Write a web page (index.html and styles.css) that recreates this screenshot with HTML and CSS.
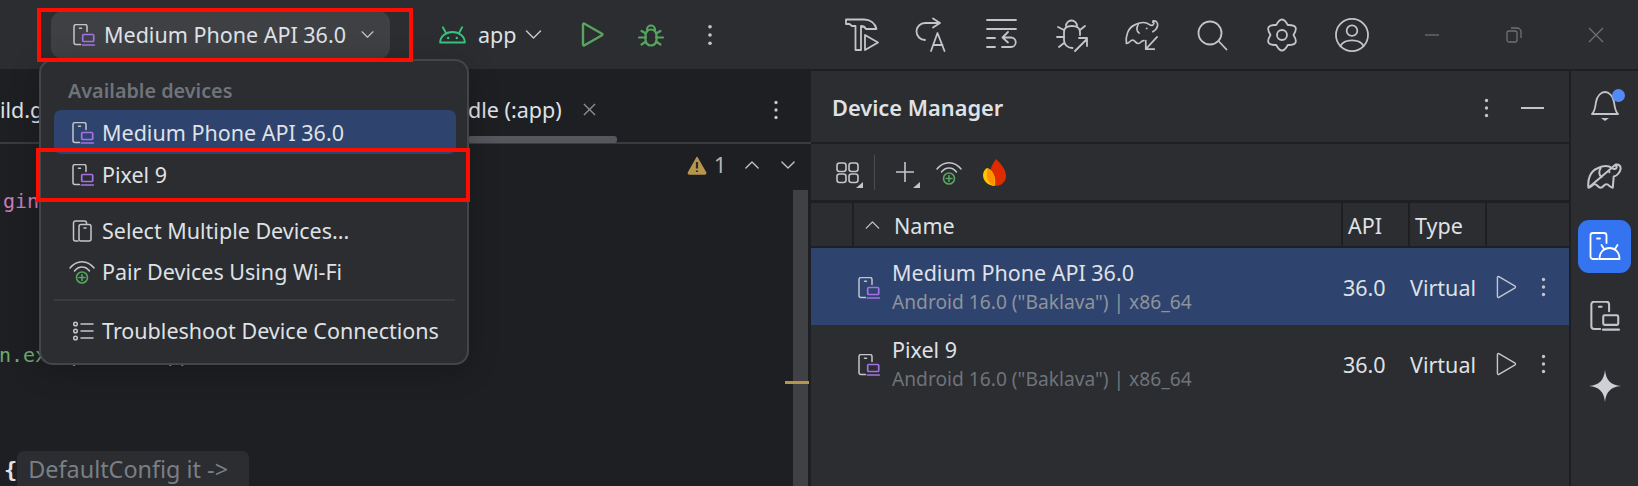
FILE: index.html
```html
<!DOCTYPE html>
<html lang="en">
<head>
<meta charset="utf-8">
<title>Device Manager</title>
<link rel="stylesheet" href="styles.css">
</head>
<body>
<svg class="defs" width="0" height="0" aria-hidden="true">
  <symbol id="device" viewBox="0 0 22 22">
    <path class="ln" d="M7.500 20.500H3a2 2 0 0 1-2-2V2.500a2 2 0 0 1 2-2h9a2 2 0 0 1 2 2V7.500"/>
    <path class="ln" d="M6.500 4.200h2"/>
    <rect class="pu" x="9.700" y="10.500" width="11" height="7" rx="1"/>
    <path class="pu" d="M9.500 21h11.800"/>
  </symbol>
  <symbol id="device-g" viewBox="0 0 22 22">
    <path class="ln" d="M7.500 20.500H3a2 2 0 0 1-2-2V2.500a2 2 0 0 1 2-2h9a2 2 0 0 1 2 2V7.500"/>
    <path class="ln" d="M6.500 4.200h2"/>
    <rect class="ln" x="9.700" y="10.500" width="11" height="7" rx="1"/>
    <path class="ln" d="M9.500 21h11.800"/>
  </symbol>
  <symbol id="wifi" viewBox="0 0 26 25">
    <path class="ln" d="M1 9C7.500 .5 18.500 .5 25 9"/>
    <path class="ln" d="M5.500 12C9.500 6.500 16.500 6.500 20.500 12"/>
    <circle class="gr" cx="13" cy="18.500" r="5.500"/>
    <path class="gr" d="M13 15.500v6M10 18.500h6"/>
  </symbol>
  <symbol id="kebab" viewBox="0 0 6 24">
    <circle class="dot" cx="3" cy="3" r="2"/>
    <circle class="dot" cx="3" cy="12" r="2"/>
    <circle class="dot" cx="3" cy="21" r="2"/>
  </symbol>
  <symbol id="chev-d" viewBox="0 0 16 9">
    <path class="ln" d="M1 1l7 7 7-7"/>
  </symbol>
  <symbol id="chev-u" viewBox="0 0 16 9">
    <path class="ln" d="M1 8l7-7 7 7"/>
  </symbol>
  <symbol id="play" viewBox="0 0 22 25">
    <path class="ln" d="M1.500 2.500a1 1 0 0 1 1.500-.8l17 10a1 1 0 0 1 0 1.600l-17 10a1 1 0 0 1-1.500-.8z"/>
  </symbol>
  <symbol id="elephant" viewBox="0 0 36 27">
    <path class="eleph-ln" d="M1.500 25C.5 17 3 8 11 5c5-2.500 11-3 15 0 2 1.500 4 1 4.500-1 .3-1-.5-1.500-1-1.500M29.500 1.200C33 .5 35 3 34.500 6c-.5 4-4.500 7-7 7.500L26.500 25c-3.500 0-3.500-3.500-6.500-3.500S17 25 14 25s-3-3.500-6-3.500S5 25 1.500 25z"/>
    <path class="eleph-ln" d="M14 5c-2 3-2 7 1 9"/>
    <circle class="dot" cx="23" cy="9" r="1.100"/>
  </symbol>
</svg>

<header class="toolbar">
  <div class="tb-left">
    <div class="device-btn">
      <svg class="ic22"><use href="#device"/></svg>
      <span class="device-label">Medium Phone API 36.0</span>
      <svg class="chev-s"><use href="#chev-d"/></svg>
    </div>
    <svg class="android" viewBox="0 0 28 18">
      <path d="M1.200 16.800a12.800 11 0 0 1 25.600 0z"/>
      <path d="M7 6.500L4 1M21 6.500L24 1"/>
      <circle cx="9.500" cy="12" r="1.300"/>
      <circle cx="18.500" cy="12" r="1.300"/>
    </svg>
    <span class="app-label">app</span>
    <svg class="chev-app"><use href="#chev-d"/></svg>
    <svg class="run" viewBox="0 0 23 25"><path d="M2 2.500a1 1 0 0 1 1.500-.8l17.500 10a1 1 0 0 1 0 1.600l-17.500 10a1 1 0 0 1-1.500-.8z"/></svg>
    <svg class="debug" viewBox="0 0 26 24">
      <path d="M9 6.500a4 4 0 0 1 8 0"/>
      <rect x="7.500" y="6.500" width="11" height="16" rx="5.500"/>
      <path d="M8 10.500L3.500 8M8 14.500H1M8 18.500L3.500 21.500M18 10.500L22.500 8M18 14.500h7M18 18.500l4.500 3"/>
    </svg>
    <svg class="tb-kebab"><use href="#kebab"/></svg>
  </div>
  <div class="tb-right">
    <div class="tool"><svg class="tic" viewBox="0 0 34 34">
      <path d="M1 1.500h18c6 0 11 3.500 12.500 9.500H21c-1-2-2.500-3-5-3v24h-5.500V8H7L4.500 6H1z"/>
      <path d="M20 17l13 7.500L20 32z"/>
    </svg></div>
    <div class="tool"><svg class="tic" viewBox="0 0 32 34">
      <path d="M23.500 5H9a8.500 8.500 0 0 0 0 17M17 .5l7 4.500-7 4.500"/>
      <path d="M15 33l6.500-18 7 18M17.500 27h9"/>
    </svg></div>
    <div class="tool"><svg class="tic" viewBox="0 0 30 34">
      <path d="M0 2h29M0 11h29M0 20h8M0 29h8M21 14l-5.500 5.500 5.500 5M16 19.500h8a4.500 4.500 0 0 1 0 9.500H15"/>
    </svg></div>
    <div class="tool"><svg class="tic" viewBox="0 0 32 34">
      <path d="M10 8a5.500 5.500 0 0 1 11 0"/>
      <path d="M24 17v-3c0-4-3-6-8-6s-8 2-8 6v8c0 5 4 8 8.500 8"/>
      <path d="M8 12L2 9M8 19H1M8 25l-5 4M24 12l5-4M19 33L31 21M23 20h8v8"/>
    </svg></div>
    <div class="tool"><svg class="tic" viewBox="0 0 36 34">
      <path d="M1.500 26C.5 18 3 9 11 6c5-2.500 11-3 15 0 2 1.500 4 1 4.500-1 .3-1-.5-1.500-1-1.500M29.500 2.200C33 1.500 35 4 34.500 7c-.5 3-2.500 5-5 6.500M1.500 26c3.500 0 3.500-3.500 6.500-3.500s3 3.500 6 3.500 3-3.500 6-3"/>
      <path d="M14 6c-2 3-2 7 1 9"/>
      <path d="M34 19L22 32M22 23v9h9"/>
      <circle class="dotf" cx="23" cy="10" r="1"/>
    </svg></div>
    <div class="tool"><svg class="tic" viewBox="0 0 30 34">
      <circle cx="13" cy="15" r="11.500"/>
      <path d="M21.500 23l8 8.500"/>
    </svg></div>
    <div class="tool"><svg class="tic" viewBox="0 0 30 34">
      <path d="M9.250 7.040Q15-4 20.750 7.040 33.190 6.500 26.500 17 33.190 27.500 20.750 26.960 15 38 9.250 26.960-3.190 27.500 3.500 17-3.190 6.500 9.250 7.040z"/>
      <circle cx="15" cy="17" r="5"/>
    </svg></div>
    <div class="tool"><svg class="tic" viewBox="0 0 35 35">
      <circle cx="17.500" cy="17.500" r="16.500"/>
      <circle cx="17.500" cy="13" r="5.500"/>
      <path d="M5.500 29c2-4 6-6 12-6s10 2 12 6"/>
    </svg></div>
    <div class="win"><svg class="wic" viewBox="0 0 16 16"><path d="M1 8h14"/></svg></div>
    <div class="win"><svg class="wic" viewBox="0 0 16 16"><rect x="1" y="4" width="10" height="11" rx="2"/><path d="M5 1h6a4 4 0 0 1 4 4v6"/></svg></div>
    <div class="win"><svg class="wic" viewBox="0 0 16 16"><path d="M1 1l14 14M15 1L1 15"/></svg></div>
  </div>
</header>

<main class="main">
  <section class="editor">
    <div class="tabs">
      <span class="tab tab-first">ild.gradle</span>
      <span class="tab">dle (:app)</span>
      <svg class="tab-x" viewBox="0 0 14 14"><path d="M1 1l12 12M13 1L1 13"/></svg>
      <svg class="tab-kebab"><use href="#kebab"/></svg>
      <div class="tab-scroll"></div>
    </div>
    <div class="code-wrap">
      <div class="code">
        <div class="line pink">gins {</div>
        <div class="line"></div>
        <div class="line"></div>
        <div class="line"></div>
        <div class="line green">n.example.com/pp</div>
        <div class="line"></div>
        <div class="line"></div>
        <div class="line"><span class="brace">{</span><span class="hint">DefaultConfig it -&gt;</span></div>
      </div>
      <div class="inspect">
        <svg class="warn" viewBox="0 0 20 19">
          <path class="warn-t" d="M10 1.500L1.500 16.500a1 1 0 0 0 1 1.500h15a1 1 0 0 0 1-1.500z"/>
          <path class="warn-m" d="M10 6v6.500M10 14.500v1.500"/>
        </svg>
        <span class="warn-n">1</span>
        <svg class="chev-i up"><use href="#chev-u"/></svg>
        <svg class="chev-i dn"><use href="#chev-d"/></svg>
      </div>
      <div class="vscroll"><div class="vmark"></div></div>
    </div>
  </section>

  <section class="panel">
    <div class="panel-head">
      <h1 class="panel-title">Device Manager</h1>
      <svg class="ph-kebab"><use href="#kebab"/></svg>
      <div class="ph-min"></div>
    </div>
    <div class="panel-tools">
      <svg class="pt-grid" viewBox="0 0 27 26">
        <rect x="1" y="1" width="9" height="8.500" rx="2.500"/>
        <rect x="13" y="1" width="9" height="8.500" rx="2.500"/>
        <rect x="1" y="12" width="9" height="8.500" rx="2.500"/>
        <rect x="13" y="12" width="9" height="8.500" rx="2.500"/>
        <path class="tri" d="M27 20v6h-7z"/>
      </svg>
      <div class="pt-sep"></div>
      <svg class="pt-plus" viewBox="0 0 26 26">
        <path d="M9 0v20M0 10h18"/>
        <path class="tri" d="M24 20v6h-7z"/>
      </svg>
      <svg class="pt-wifi"><use href="#wifi"/></svg>
      <svg class="pt-fire" viewBox="0 0 23 27">
        <path fill="#dd2c00" d="M13 0c4 4 10 10 10 17 0 6-5 10-10.500 10C8 27 5 24 4 20 6 17 7 13 8 9c1-3 3-6 5-9z"/>
        <path fill="#ffc400" d="M4 9c4 1 7 5 8 11 .4 3 .2 5-.5 7C6 26.500 0 23 0 16 0 13 2 10 4 9z"/>
        <path fill="#ff9100" d="M4.500 9.500c3.500 1 6.500 5 7 10.500.3 2.500.2 5-.5 7-3-1-6-5-6.800-8.500C4 15 4 12 4.500 9.500z"/>
      </svg>
    </div>
    <div class="t-head">
      <div class="th th-first"></div>
      <div class="th th-name"><svg class="chev-th"><use href="#chev-u"/></svg><span>Name</span></div>
      <div class="th">API</div>
      <div class="th">Type</div>
      <div class="th"></div>
    </div>
    <div class="t-row selected">
      <svg class="ic22 row-ic"><use href="#device"/></svg>
      <div class="row-name">
        <div class="row-title">Medium Phone API 36.0</div>
        <div class="row-sub">Android 16.0 ("Baklava") | x86_64</div>
      </div>
      <div class="row-val">36.0</div>
      <div class="row-val">Virtual</div>
      <div class="row-acts">
        <svg class="row-play"><use href="#play"/></svg>
        <svg class="row-kebab"><use href="#kebab"/></svg>
      </div>
    </div>
    <div class="t-row">
      <svg class="ic22 row-ic"><use href="#device"/></svg>
      <div class="row-name">
        <div class="row-title">Pixel 9</div>
        <div class="row-sub">Android 16.0 ("Baklava") | x86_64</div>
      </div>
      <div class="row-val">36.0</div>
      <div class="row-val">Virtual</div>
      <div class="row-acts">
        <svg class="row-play"><use href="#play"/></svg>
        <svg class="row-kebab"><use href="#kebab"/></svg>
      </div>
    </div>
  </section>

  <aside class="stripe">
    <div class="st-cell">
      <div class="bell-wrap">
        <svg class="st-bell" viewBox="0 0 28 32">
          <path d="M1 24c3-3 3-6 4-12 1-6 5-10 9-10s8 4 9 10c1 6 1 9 4 12z"/>
          <path class="bell-clap" d="M10 28h8l-4 3z"/>
        </svg>
        <span class="badge"></span>
      </div>
    </div>
    <div class="st-cell"><svg class="st-eleph"><use href="#elephant"/></svg></div>
    <div class="st-cell">
      <div class="st-active">
        <svg class="st-run" viewBox="0 0 32 30">
          <path d="M9 28H4a2.500 2.500 0 0 1-2.500-2.500v-21A2.500 2.500 0 0 1 4 2h11a2.500 2.500 0 0 1 2.500 2.500V12"/>
          <path d="M8 7.500h3"/>
          <path d="M10.500 28c0-7 4.500-11 10-11s10 4 10 11z"/>
          <path d="M15 18l-2.500-4M26 18l2.500-4"/>
        </svg>
      </div>
    </div>
    <div class="st-cell"><svg class="st-dev"><use href="#device-g"/></svg></div>
    <div class="st-cell"><svg class="st-star" viewBox="0 0 32 32"><path d="M16 0c1 10 5.500 15 16 16-10.500 1-15 6-16 16-1-10-5.500-15-16-16C10.500 15 15 10 16 0z"/></svg></div>
  </aside>
</main>

<div class="popup">
  <div class="pop-title">Available devices</div>
  <div class="pop-row pop-selected"><svg class="ic22"><use href="#device"/></svg><span>Medium Phone API 36.0</span></div>
  <div class="pop-row"><svg class="ic22"><use href="#device"/></svg><span>Pixel 9</span></div>
  <div class="pop-sep pop-sep-a"></div>
  <div class="pop-row">
    <svg class="ic22" viewBox="0 0 22 22">
      <path class="ln" d="M6 21H3.500a2 2 0 0 1-2-2V3a2 2 0 0 1 2-2h9a2 2 0 0 1 2 2v1"/>
      <rect class="ln" x="7" y="4.500" width="12" height="16.500" rx="2"/>
      <path class="ln" d="M12 8h2"/>
    </svg>
    <span>Select Multiple Devices...</span>
  </div>
  <div class="pop-row"><svg class="ic22 pop-wifi"><use href="#wifi"/></svg><span>Pair Devices Using Wi-Fi</span></div>
  <div class="pop-sep pop-sep-b"></div>
  <div class="pop-row">
    <svg class="ic22" viewBox="0 0 22 22">
      <circle class="ln" cx="3.500" cy="4" r="1.800"/>
      <circle class="ln" cx="3.500" cy="11" r="1.800"/>
      <circle class="ln" cx="3.500" cy="18" r="1.800"/>
      <path class="ln" d="M9 4h12M9 11h12M9 18h12"/>
    </svg>
    <span>Troubleshoot Device Connections</span>
  </div>
</div>

<div class="mark mark-a"></div>
<div class="mark mark-b"></div>
</body>
</html>
```
FILE: styles.css
```css
* { box-sizing: border-box; }
html, body { margin: 0; padding: 0; }
body {
  width: 1638px; height: 486px; overflow: hidden; position: relative;
  background: #1e1f22; color: #dfe1e5;
  font-family: "Noto Sans", "Open Sans", sans-serif; font-size: 21.5px;
}
svg { display: block; flex: none; overflow: visible; }
.defs { position: absolute; }

.ln { fill: none; stroke: #c3c5ca; stroke-width: 1.5; stroke-linecap: round; stroke-linejoin: round; }
.pu { fill: none; stroke: #a571e6; stroke-width: 1.7; stroke-linecap: round; }
.gr { fill: none; stroke: #57a55f; stroke-width: 1.6; stroke-linecap: round; }
.dot { fill: #c3c5ca; }
.eleph-ln { fill: none; stroke: #c3c5ca; stroke-width: 2.100; stroke-linecap: round; stroke-linejoin: round; }
.ic22 { width: 22px; height: 22px; }

/* top toolbar */
.toolbar {
  height: 71px; background: #2b2d30; border-bottom: 2px solid #1e1f22;
  display: flex; align-items: center; justify-content: space-between; padding: 0 1px 0 51px;
}
.tb-left { display: flex; align-items: center; }
.device-btn {
  width: 339px; height: 48px; background: #3e4044; border-radius: 12px;
  display: flex; align-items: center; padding-left: 22px;
}
.device-label { margin-left: 9px; white-space: nowrap; }
.chev-s { width: 13px; height: 7px; margin-left: 15px; }
.android { width: 27px; height: 18px; margin-left: 49px; fill: none; stroke: #36c47d; stroke-width: 2; stroke-linecap: round; stroke-linejoin: round; }
.android circle { fill: #36c47d; stroke: none; }
.app-label { margin-left: 12px; margin-bottom: 1px; }
.chev-app { width: 17px; height: 9px; margin-left: 8px; }
.run { width: 23px; height: 25px; margin-left: 39px; fill: none; stroke: #57a55f; stroke-width: 2.400; stroke-linejoin: round; }
.debug { width: 26px; height: 24px; margin-left: 34px; fill: none; stroke: #57a55f; stroke-width: 2.200; stroke-linecap: round; }
.tb-kebab { width: 6px; height: 22px; margin-left: 43px; }
.tb-right { display: flex; align-items: center; }
.tool { width: 70px; display: flex; justify-content: center; }
.tic { width: 34px; height: 34px; fill: none; stroke: #c3c5ca; stroke-width: 1.800; stroke-linecap: round; stroke-linejoin: round; }
.dotf { fill: #c3c5ca; stroke: none; }
.win { width: 82px; display: flex; justify-content: center; }
.tool + .win { margin-left: 4px; }
.wic { width: 16px; height: 16px; fill: none; stroke: #6e7075; stroke-width: 1.300; }

/* main area */
.main { display: flex; height: 415px; }
.editor { width: 811px; flex: none; display: flex; flex-direction: column; }

.tabs {
  height: 73px; display: flex; align-items: center; position: relative;
  background: #1e1f22; border-bottom: 2px solid #393b40; padding-top: 6px;
}
.tab { white-space: nowrap; color: #dfe1e5; }
.tab-first { width: 468px; flex: none; }
.tab-x { width: 13px; height: 13px; margin-left: 21px; fill: none; stroke: #8a8c91; stroke-width: 1.500; }
.tab-kebab { width: 6px; height: 20px; margin-left: auto; margin-right: 32px; }
.tab-scroll { position: absolute; left: 468px; width: 149px; bottom: -1px; height: 7px; background: #55575c; border-radius: 3px; }

.code-wrap { flex: 1; display: flex; position: relative; min-height: 0; }
.code { flex: 1; padding: 38px 0 0 3px; font-family: "DejaVu Sans Mono", "Liberation Mono", monospace; font-size: 20px; min-width: 0; overflow: hidden; }
.line { height: 38.400px; line-height: 38px; white-space: pre; }
.pink { color: #c77dbb; }
.green { color: #6aab73; margin-left: -4px; }
.brace { color: #dfe1e5; font-size: 22px; font-weight: 700; margin-left: 1px; }
.hint {
  display: inline-block; margin-left: 0; padding: 0 21px 0 11px; height: 40px; line-height: 36px; vertical-align: top;
  background: #2b2d30; color: #7a7e85; border-radius: 7px;
  font-family: "Noto Sans", sans-serif; font-size: 23.400px;
}
.inspect { position: absolute; left: 687px; top: 11px; display: flex; align-items: center; }
.warn { width: 20px; height: 19px; }
.warn-t { fill: #b8954c; stroke: #b8954c; stroke-width: 1.500; stroke-linejoin: round; }
.warn-m { stroke: #2b2d30; stroke-width: 2.200; fill: none; }
.warn-n { margin-left: 7px; font-size: 21.5px; line-height: 20px; color: #b4b6bb; }
.chev-i { width: 14px; height: 8px; }
.chev-i.up { margin-left: 19px; }
.chev-i.dn { margin-left: 22px; }
.vscroll { width: 15px; flex: none; margin: 46px 3px 0 0; background: #3f4144; position: relative; }
.vmark { position: absolute; left: -8px; right: -1px; top: 191px; height: 3px; background: #b8954c; }

/* device manager panel */
.panel { width: 758px; flex: none; background: #2b2d30; display: flex; flex-direction: column; }
.panel-head { height: 73px; flex: none; border-bottom: 2px solid #1e1f22; display: flex; align-items: center; padding: 2px 25px 0 21px; }
.panel-title { margin: 0; font-size: 21.800px; font-weight: 600; color: #dfe1e5; }
.ph-kebab { width: 5px; height: 20px; margin-left: auto; }
.ph-min { width: 23px; height: 2px; background: #c3c5ca; margin-left: 32px; }
.panel-tools { height: 59px; flex: none; display: flex; align-items: center; padding-left: 25px; border-bottom: 3px solid #1e1f22; }
.pt-grid { width: 27px; height: 26px; margin-top: 6px; fill: none; stroke: #c3c5ca; stroke-width: 1.600; }
.pt-plus { width: 26px; height: 26px; margin-top: 6px; fill: none; stroke: #c3c5ca; stroke-width: 1.600; }
.tri { fill: #c3c5ca; stroke: none; }
.pt-sep { width: 1px; height: 35px; background: #4a4c50; margin-left: 11px; }
.pt-sep + .pt-plus { margin-left: 21px; }
.pt-wifi { width: 26px; height: 25px; margin-left: 14px; }
.pt-fire { width: 23px; height: 27px; margin-left: 21px; }

.t-head { height: 45px; flex: none; display: grid; grid-template-columns: 43px 489px 67px 77px 1fr; border-bottom: 2px solid #1e1f22; }
.th { border-right: 2px solid #1e1f22; display: flex; align-items: center; padding-left: 5px; padding-top: 1px; }
.th:last-child { border-right: 0; }
.th-first { padding: 0; }
.th-name { padding-left: 11px; }
.chev-th { width: 15px; height: 8px; margin-right: 14px; }

.t-row { height: 77px; flex: none; display: grid; grid-template-columns: 81px 451px 67px 86px 1fr; align-items: center; }
.t-row.selected { background: #2e436e; }
.row-ic { margin-left: 47px; margin-top: 3px; }
.row-title { line-height: 26px; color: #dfe1e5; white-space: nowrap; }
.row-sub { font-size: 19.200px; line-height: 24px; margin-top: 4px; color: #6f737a; white-space: nowrap; }
.selected .row-sub { color: #8f939b; }
.row-val { padding-top: 2px; white-space: nowrap; }
.row-acts { display: flex; align-items: center; }
.row-play { width: 21px; height: 24px; }
.row-kebab { width: 5px; height: 22px; margin-left: 24px; }

/* right tool stripe */
.stripe { flex: 1; background: #2b2d30; border-left: 2px solid #1e1f22; display: flex; flex-direction: column; }
.st-cell { height: 70px; flex: none; display: flex; align-items: center; justify-content: center; }
.bell-wrap { position: relative; width: 28px; height: 32px; }
.st-bell { width: 28px; height: 32px; fill: none; stroke: #c3c5ca; stroke-width: 1.800; stroke-linejoin: round; }
.bell-clap { fill: #c3c5ca; stroke: none; }
.badge { position: absolute; right: -6px; top: -1px; width: 13px; height: 13px; background: #548af7; border-radius: 50%; }
.st-eleph { width: 35px; height: 27px; }
.st-active { width: 53px; height: 53px; background: #3574f0; border-radius: 11px; display: flex; align-items: center; justify-content: center; }
.st-run { width: 32px; height: 30px; fill: none; stroke: #fff; stroke-width: 1.800; stroke-linecap: round; stroke-linejoin: round; }
.st-dev { width: 30px; height: 30px; }
.st-star { width: 32px; height: 32px; fill: #ced0d6; }

/* device dropdown */
.popup {
  position: absolute; left: 39px; top: 59px; width: 430px; height: 306px;
  background: #2b2d30; border: 2px solid #43454a; border-radius: 14px;
  box-shadow: 0 6px 30px rgba(0,0,0,.22);
  padding: 0 11px 0 13px;
}
.pop-title { height: 49px; padding: 17px 0 0 14px; font-size: 19.800px; line-height: 26px; font-weight: 600; color: #6f737a; }
.pop-row { height: 41px; display: flex; align-items: center; padding-left: 18px; white-space: nowrap; }
.pop-row span { margin-left: 8px; }
.pop-selected { height: 44px; padding-top: 1px; background: #2e436e; border-radius: 7px; }
.pop-sep { height: 2px; background: #393b40; margin: 0 1px 0 0; }
.pop-sep-a { margin-top: 5px; margin-bottom: 8px; }
.pop-sep-b { margin-top: 7px; margin-bottom: 9px; }
.pop-wifi { width: 26px; height: 25px; margin-left: -3px; margin-right: -1px; }

/* red annotation frames */
.mark { position: absolute; border: 4px solid #fe0e00; }
.mark-a { left: 37px; top: 8px; width: 376px; height: 54px; }
.mark-b { left: 36px; top: 148px; width: 434px; height: 54px; }
```
